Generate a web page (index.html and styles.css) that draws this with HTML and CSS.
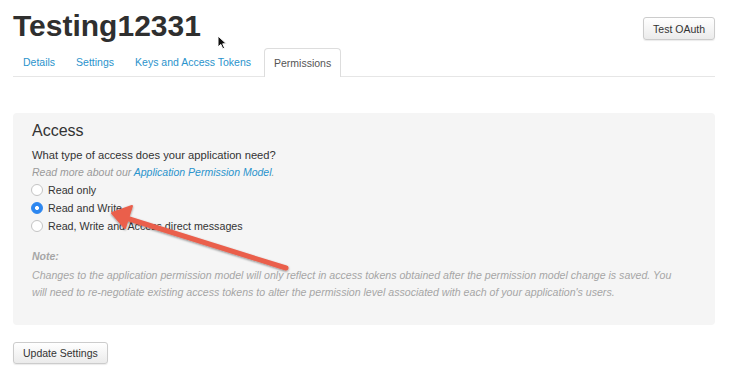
FILE: index.html
```html
<html>
  <head>
    <meta charset="utf-8" />
    <title>Testing12331 - Permissions</title>
    <link rel="stylesheet" href="styles.css">
  </head>
  <body>
    <div class="page">
      <header class="head">
        <h1>Testing12331</h1>
        <button class="button">Test OAuth</button>
      </header>

      <nav class="tabs">
        <a class="tab">Details</a>
        <a class="tab">Settings</a>
        <a class="tab">Keys and Access Tokens</a>
        <a class="tab active">Permissions</a>
      </nav>

      <section class="panel">
        <h2>Access</h2>
        <p class="question">What type of access does your application need?</p>
        <p class="hint">Read more about our <a class="link">Application Permission Model</a>.</p>
        <label class="option"><span class="radio"></span>Read only</label>
        <label class="option"><span class="radio checked"></span>Read and Write</label>
        <label class="option"><span class="radio"></span>Read, Write and Access direct messages</label>
        <p class="note-title">Note:</p>
        <p class="note">Changes to the application permission model will only reflect in access tokens obtained after the permission model change is saved. You will need to re-negotiate existing access tokens to alter the permission level associated with each of your application's users.</p>
      </section>

      <button class="button update">Update Settings</button>
    </div>

    <!-- pointer and annotation arrow drawn over the page -->
    <svg class="cursor" width="12" height="16" viewBox="0 0 12 16">
      <path d="M1 1 L1 12 L3.8 9.4 L5.8 13.8 L7.6 13 L5.7 8.8 L9.4 8.8 Z" fill="#111" stroke="#fff" stroke-width="1"/>
    </svg>
    <svg class="arrow" width="750" height="391" viewBox="0 0 750 391">
      <defs>
        <filter id="shadow" x="-10%" y="-10%" width="120%" height="130%">
          <feDropShadow dx="0" dy="1" stdDeviation="0.8" flood-color="#000" flood-opacity="0.45"/>
        </filter>
      </defs>
      <g filter="url(#shadow)" fill="#ea5f4c" stroke="#ea5f4c">
        <line x1="286" y1="268" x2="126" y2="218" stroke-width="5" stroke-linecap="round"/>
        <polygon points="112,213 132,206 125,228" stroke-width="2" stroke-linejoin="round"/>
      </g>
    </svg>
  </body>
</html>
```

FILE: styles.css
```css
html, body {
  margin: 0;
  background-color: #ffffff;
}

body {
  font-family: "Liberation Sans", Arial, sans-serif;
  color: #333333;
  position: relative;
  width: 750px;
  height: 391px;
  overflow: hidden;
}

.page {
  width: 702px;
  padding-left: 13px;
}

.head {
  display: flex;
  justify-content: space-between;
  align-items: flex-start;
  padding-top: 9px;
}

h1 {
  margin: 0;
  font-size: 30px;
  line-height: 34px;
  font-weight: bold;
  color: #2f2f2f;
}

.button {
  font-family: "Liberation Sans", Arial, sans-serif;
  font-size: 10.5px;
  color: #333333;
  background: linear-gradient(#ffffff, #ebebeb);
  border: 1px solid #cccccc;
  border-radius: 3px;
  box-shadow: 0 1px 1px rgba(0, 0, 0, 0.08);
  padding: 0 9px;
  height: 23px;
}

.head .button {
  margin-top: 8px;
}

.tabs {
  display: flex;
  margin-top: 5px;
  border-bottom: 1px solid #e6e6e6;
}

.tab {
  font-size: 10.5px;
  line-height: 27px;
  padding: 0 9px;
  color: #2a93cc;
  border: 1px solid transparent;
  border-bottom: none;
  border-radius: 4px 4px 0 0;
  margin-right: 1px;
}

.tab.active {
  color: #555555;
  border-color: #dddddd;
  background-color: #ffffff;
  margin-bottom: -1px;
  line-height: 28px;
  margin-left: 2px;
}

.panel {
  margin-top: 36px;
  background-color: #f5f5f5;
  border-radius: 4px;
  padding: 8px 19px 25px;
}

h2 {
  margin: 0;
  font-size: 16px;
  line-height: 20px;
  font-weight: normal;
  color: #333333;
}

p {
  margin: 0;
}

.question {
  font-size: 11.2px;
  line-height: 18px;
  margin-top: 5px;
}

.hint {
  font-size: 10.5px;
  line-height: 17px;
  font-style: italic;
  color: #9a9a9a;
}

.link {
  color: #2a93cc;
}

.option {
  display: flex;
  align-items: center;
  font-size: 10.7px;
  line-height: 18px;
}

.radio {
  width: 10px;
  height: 10px;
  border: 1px solid #c4c4c4;
  border-radius: 50%;
  background-color: #ffffff;
  margin-right: 5px;
  margin-left: -1px;
}

.radio.checked {
  border-color: #2d87f0;
  background: radial-gradient(circle, #ffffff 0, #ffffff 1.7px, #2d87f0 2.3px);
}

.note-title {
  margin-top: 13px;
  font-size: 10.5px;
  line-height: 17px;
  font-style: italic;
  font-weight: bold;
  color: #a6a6a6;
}

.note {
  margin-top: 2px;
  max-width: 656px;
  font-size: 10.6px;
  line-height: 16.5px;
  font-style: italic;
  color: #a6a6a6;
}

.update {
  margin-top: 17px;
  height: 22px;
}

.cursor {
  position: absolute;
  left: 217px;
  top: 35px;
}

.arrow {
  position: absolute;
  left: 0;
  top: 0;
  pointer-events: none;
}
```
